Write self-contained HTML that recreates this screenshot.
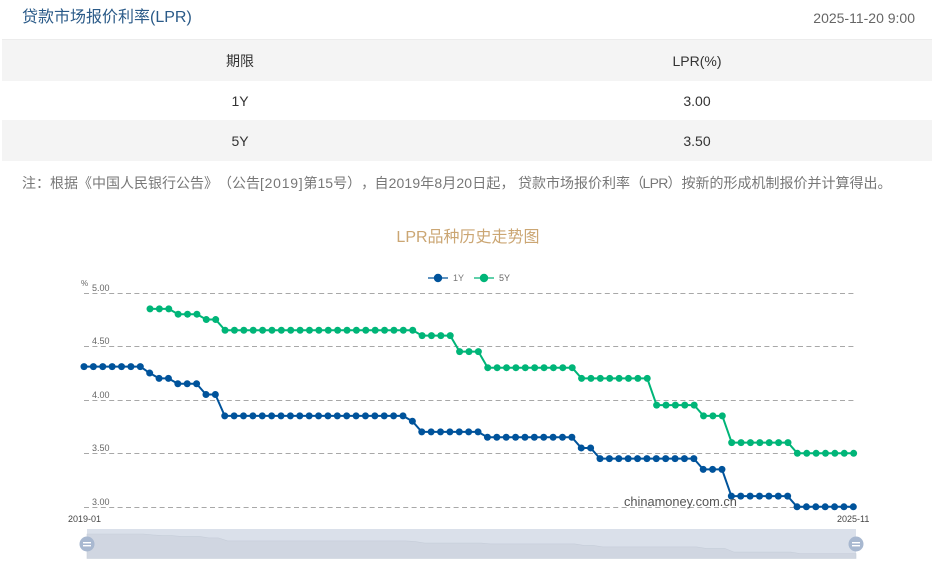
<!DOCTYPE html>
<html lang="zh">
<head>
<meta charset="utf-8">
<style>
html,body{margin:0;padding:0;background:#fff;width:932px;height:573px;overflow:hidden}
body{font-family:"Liberation Sans","Noto Sans CJK SC",sans-serif;position:relative;text-spacing-trim:space-all}
.a{position:absolute;white-space:nowrap}
.row{position:absolute;left:2px;width:930px}
.c{position:absolute;transform:translateX(-50%);font-size:14px;color:#333;line-height:20px;white-space:nowrap}
.n{position:absolute;top:173px;font-size:14px;line-height:20px;color:#777;white-space:nowrap;font-family:"Liberation Sans","Noto Sans CJK TC",sans-serif}
svg{position:absolute;left:0;top:0}
svg text{font-family:"Liberation Sans","Noto Sans CJK SC",sans-serif}
</style>
</head>
<body>
<div class="a" style="left:22px;top:8px;font-size:16px;line-height:20px;color:#2a5a88">贷款市场报价利率(LPR)</div>
<div class="a" style="right:17px;top:8px;font-size:14px;line-height:20px;color:#666">2025-11-20 9:00</div>
<div class="row" style="top:39px;height:1px;background:#ececec"></div>
<div class="row" style="top:40px;height:41px;background:#f4f4f4"></div>
<div class="row" style="top:120px;height:41px;background:#f4f4f4"></div>
<div class="c" style="left:240px;top:51px">期限</div>
<div class="c" style="left:697px;top:51px">LPR(%)</div>
<div class="c" style="left:240px;top:91px">1Y</div>
<div class="c" style="left:697px;top:91px">3.00</div>
<div class="c" style="left:240px;top:131px">5Y</div>
<div class="c" style="left:697px;top:131px">3.50</div>
<div class="n" style="left:22px">注：根据《中国人民银行公告》（公告</div>
<div class="n" style="left:260px;letter-spacing:.75px">[2019]</div>
<div class="n" style="left:303.5px">第15号），</div>
<div class="n" style="left:374.5px;letter-spacing:.12px">自2019年8月20日起，</div>
<div class="n" style="left:518px">贷款市场报价利率（</div>
<div class="n" style="left:642.5px;letter-spacing:-.7px">LPR</div>
<div class="n" style="left:667.5px">）按新的形成机制报价并计算得出。</div>

<svg width="932" height="573" viewBox="0 0 932 573">
<defs>
<marker id="b" markerUnits="userSpaceOnUse" markerWidth="10" markerHeight="10" refX="5" refY="5"><circle cx="5" cy="5" r="3.5" fill="#00539b"/></marker>
<marker id="g" markerUnits="userSpaceOnUse" markerWidth="10" markerHeight="10" refX="5" refY="5"><circle cx="5" cy="5" r="3.5" fill="#00b578"/></marker>
</defs>
<text x="468" y="242" font-size="16" fill="#cba673" text-anchor="middle">LPR品种历史走势图</text>

<g stroke="#a8a8a8" stroke-width="1" stroke-dasharray="5 3.4">
<line x1="84" x2="855" y1="293.5" y2="293.5"/>
<line x1="84" x2="855" y1="346.5" y2="346.5"/>
<line x1="84" x2="855" y1="400.5" y2="400.5"/>
<line x1="84" x2="855" y1="453.5" y2="453.5"/>
<line x1="84" x2="855" y1="507.5" y2="507.5"/>
</g>
<g font-size="9" fill="#666">
<text x="81" y="286" font-size="8">%</text>
<text x="92" y="291">5.00</text>
<text x="92" y="344">4.50</text>
<text x="92" y="398">4.00</text>
<text x="92" y="451">3.50</text>
<text x="92" y="505">3.00</text>
<text x="68" y="522" fill="#444">2019-01</text>
<text x="837" y="522" fill="#444">2025-11</text>
</g>

<line x1="428" x2="448" y1="278" y2="278" stroke="#00539b" stroke-width="1.3"/>
<circle cx="438" cy="278" r="4.2" fill="#00539b"/>
<text x="453" y="281" font-size="9" fill="#777">1Y</text>
<line x1="474" x2="494" y1="278" y2="278" stroke="#00b578" stroke-width="1.3"/>
<circle cx="484" cy="278" r="4.2" fill="#00b578"/>
<text x="499" y="281" font-size="9" fill="#666">5Y</text>

<path fill="none" stroke="#00b578" stroke-width="2" stroke-linejoin="round" marker-start="url(#g)" marker-mid="url(#g)" marker-end="url(#g)" d="M150 308.85h9.382h9.382l9.382 5.35h9.382h9.382l9.382 5.35h9.382l9.382 10.7h9.382h9.382h9.382h9.382h9.382h9.382h9.382h9.382h9.382h9.382h9.382h9.382h9.382h9.382h9.382h9.382h9.382h9.382h9.382h9.382l9.382 5.35h9.382h9.382h9.382l9.382 16.05h9.382h9.382l9.382 16.05h9.382h9.382h9.382h9.382h9.382h9.382h9.382h9.382h9.382l9.382 10.7h9.382h9.382h9.382h9.382h9.382h9.382h9.382l9.382 26.75h9.382h9.382h9.382h9.382l9.382 10.7h9.382h9.382l9.382 26.75h9.382h9.382h9.382h9.382h9.382h9.382l9.382 10.7h9.382h9.382h9.382h9.382h9.382h9.382"/>

<path fill="none" stroke="#00539b" stroke-width="2" stroke-linejoin="round" marker-start="url(#b)" marker-mid="url(#b)" marker-end="url(#b)" d="M84 366.6h9.382h9.382h9.382h9.382h9.382h9.382l9.382 6.45l9.382 5.35h9.382l9.382 5.35h9.382h9.382l9.382 10.75h9.382l9.382 21.35h9.382h9.382h9.382h9.382h9.382h9.382h9.382h9.382h9.382h9.382h9.382h9.382h9.382h9.382h9.382h9.382h9.382h9.382h9.382l9.382 5.35l9.382 10.7h9.382h9.382h9.382h9.382h9.382h9.382l9.382 5.35h9.382h9.382h9.382h9.382h9.382h9.382h9.382h9.382h9.382l9.382 10.7h9.382l9.382 10.7h9.382h9.382h9.382h9.382h9.382h9.382h9.382h9.382h9.382h9.382l9.382 10.7h9.382h9.382l9.382 26.75h9.382h9.382h9.382h9.382h9.382h9.382l9.382 10.7h9.382h9.382h9.382h9.382h9.382h9.382"/>

<text x="624" y="506" font-size="12.8" fill="#555">chinamoney.com.cn</text>

<rect x="87" y="529" width="769" height="29.5" fill="#dae0ea"/>
<path fill="#d0d6e1" stroke="#c6cdd9" stroke-width=".6" d="M87 534H143.3L152.6 534.9L162 535.6H171.4L180.8 536.4H199.5L208.9 537.9H218.3L227.7 540.9H405.9L415.2 541.6L424.6 543.1H480.9L490.3 543.9H574.7L584 545.4H593.4L602.8 546.9H696.6L706 548.4H724.7L734.1 552.1H790.4L799.7 553.5H856V558.5H87Z"/>
<g>
<circle cx="87" cy="544" r="7.5" fill="#a8b8d0"/>
<rect x="83" y="542" width="8" height="1.4" fill="#fff"/>
<rect x="83" y="545" width="8" height="1.4" fill="#fff"/>
<circle cx="856" cy="544" r="7.5" fill="#a8b8d0"/>
<rect x="852" y="542" width="8" height="1.4" fill="#fff"/>
<rect x="852" y="545" width="8" height="1.4" fill="#fff"/>
</g>
</svg>
</body>
</html>
